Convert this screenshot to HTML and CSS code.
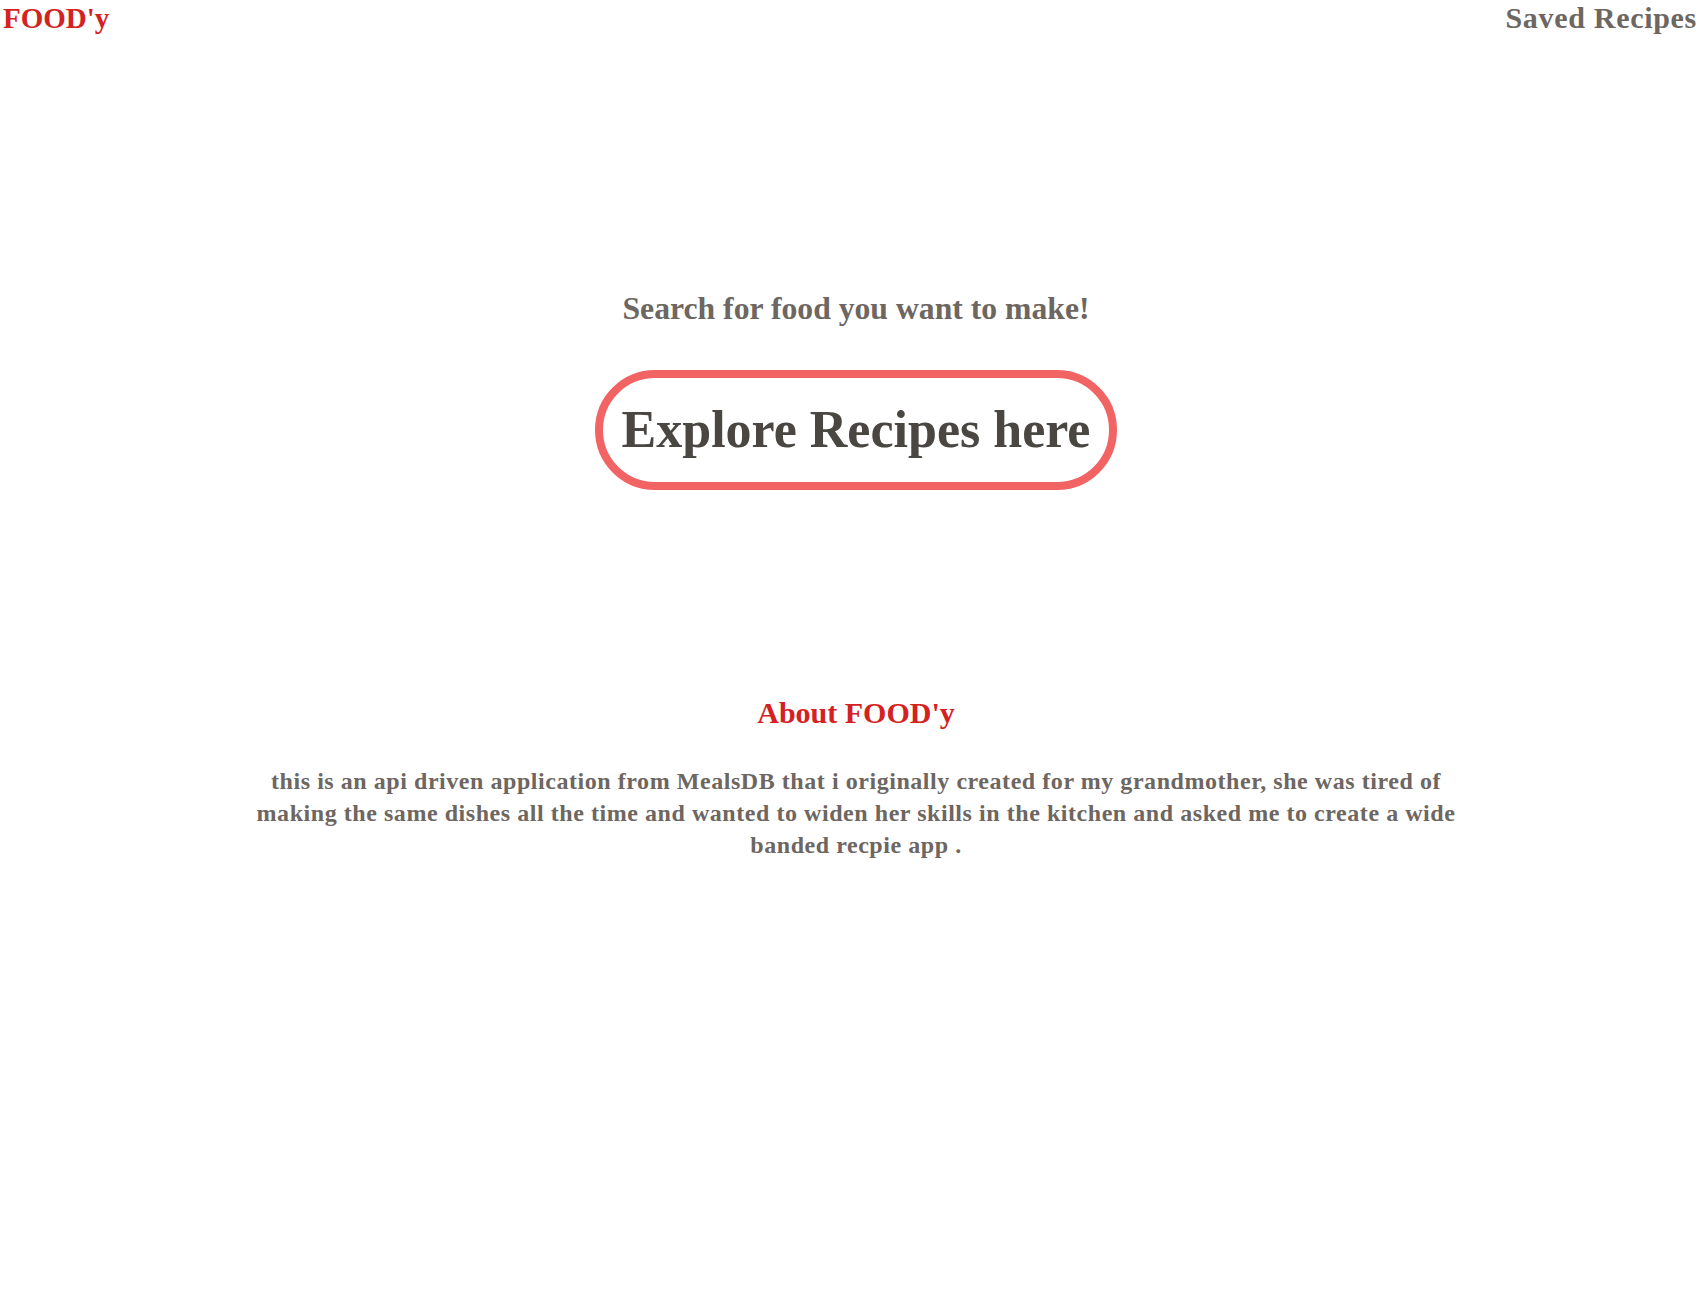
FILE: index.html
```html
<!DOCTYPE html>
<html>
<head>
<meta charset="utf-8">
<title>FOOD'y</title>
<link rel="stylesheet" href="styles.css">
</head>
<body>
<header class="nav">
  <a class="logo" href="#">FOOD'y</a>
  <a class="nav-link" href="#">Saved Recipes</a>
</header>
<main class="content">
  <section class="hero">
    <h2 class="hero-title">Search for food you want to make!</h2>
    <a class="explore" href="#">Explore Recipes here</a>
  </section>
  <section class="about">
    <h2 class="about-title">About FOOD'y</h2>
    <p class="about-text">this is an api driven application from MealsDB that i originally created for my grandmother, she was tired of making the same dishes all the time and wanted to widen her skills in the kitchen and asked me to create a wide banded recpie app .</p>
  </section>
</main>
</body>
</html>
```
FILE: styles.css
```css
html, body {
  margin: 0;
  padding: 0;
  background: #fff;
}
body {
  font-family: "Liberation Serif", "Times New Roman", serif;
  font-weight: 700;
  color: #6d6661;
}
a { text-decoration: none; }
.nav {
  display: flex;
  justify-content: space-between;
  align-items: flex-start;
  padding: 0 6px 0 3px;
}
.logo {
  color: #d42121;
  font-size: 29px;
  line-height: 36px;
}
.nav-link {
  color: #6d6661;
  font-size: 30px;
  line-height: 36px;
  letter-spacing: 0.7px;
}
.content {
  padding-left: 9px;
}
.hero {
  display: flex;
  flex-direction: column;
  align-items: center;
  padding-top: 253px;
}
.hero-title {
  margin: 0;
  font-size: 31.7px;
  line-height: 40px;
  color: #6d6661;
}
.explore {
  margin-top: 41px;
  border: 8px solid #f26464;
  border-radius: 70px;
  padding: 16px 19px;
  color: #4a4743;
  font-size: 52px;
  line-height: 72px;
}
.about {
  display: flex;
  flex-direction: column;
  align-items: center;
  padding-top: 203px;
}
.about-title {
  margin: 0;
  color: #d42121;
  font-size: 30px;
  line-height: 40px;
}
.about-text {
  margin: 32px 0 0;
  width: 1240px;
  text-align: center;
  font-size: 24px;
  line-height: 32px;
  letter-spacing: 0.55px;
}
```
